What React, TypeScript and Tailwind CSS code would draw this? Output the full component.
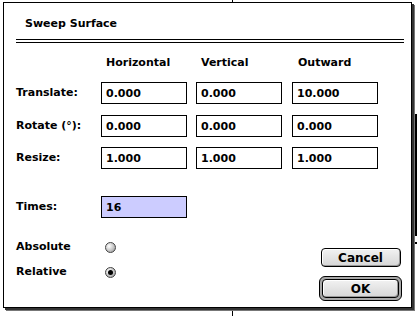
import type { ReactNode } from 'react';

function Field({ value, className = '' }: { value: string; className?: string }) {
  return (
    <div
      className={`h-[22px] w-[86px] border border-black flex items-center pl-[4px] leading-none ${className}`}
    >
      {value}
    </div>
  );
}

function Row({ label, values, className = '' }: { label: string; values: string[]; className?: string }) {
  return (
    <div className={`flex items-center ${className}`}>
      <div className="w-[85px]">{label}</div>
      <Field value={values[0]} />
      <Field value={values[1]} className="ml-[9px]" />
      <Field value={values[2]} className="ml-[10px]" />
    </div>
  );
}

function Radio({ checked }: { checked?: boolean }) {
  return (
    <div className="w-[11px] h-[11px] rounded-full border border-[#444] bg-[radial-gradient(circle_at_35%_35%,#ffffff,#c4c4c4_55%,#8a8a8a)] flex items-center justify-center">
      {checked && <div className="w-[5px] h-[5px] rounded-full bg-black" />}
    </div>
  );
}

function MacButton({ children, className = '' }: { children: ReactNode; className?: string }) {
  return (
    <div
      className={`flex items-center justify-center border border-black rounded-[4px] bg-[linear-gradient(#f2f2f2,#d6d6d6)] shadow-[inset_-1px_-1px_0_#999,inset_1px_1px_0_#fff] ${className}`}
    >
      {children}
    </div>
  );
}

export default function App() {
  return (
    <div className="relative w-[417px] h-[316px] bg-white overflow-hidden font-['DejaVu_Sans',sans-serif] font-bold text-[11px] text-black">
      {/* bits of the window behind */}
      <div className="absolute left-[232px] top-0 w-px h-[2px] bg-black" />
      <div className="absolute left-[232px] top-[310px] w-px h-[6px] bg-black" />
      <div className="absolute left-[413px] top-[114px] w-[4px] h-[122px] bg-black" />
      <div className="absolute left-[413px] top-[242px] w-[4px] h-[2px] bg-black" />

      <div className="relative ml-[3px] mt-[2px] w-[409px] h-[306px] border border-black bg-white shadow-[2px_2px_0_#333,3px_3px_0_#777]">
        <div className="pl-[21px] mt-[14px] leading-[14px]">Sweep Surface</div>
        <div className="ml-[12px] mt-[8px] w-[388px] h-[4px] border-t border-b border-black" />

        <div className="flex ml-[102px] mt-[13px] leading-[14px]">
          <div className="w-[95px]">Horizontal</div>
          <div className="w-[97px]">Vertical</div>
          <div>Outward</div>
        </div>

        <div className="pl-[12px]">
          <Row label="Translate:" values={['0.000', '0.000', '10.000']} className="mt-[12px]" />
          <Row label="Rotate (°):" values={['0.000', '0.000', '0.000']} className="mt-[11px]" />
          <Row label="Resize:" values={['1.000', '1.000', '1.000']} className="mt-[10px]" />

          <div className="flex items-center mt-[27px]">
            <div className="w-[85px]">Times:</div>
            <Field value="16" className="bg-[#ccccff]" />
          </div>

          <div className="flex">
            <div className="flex flex-col gap-[11px] mt-[22px]">
              <div className="flex items-center h-[14px]">
                <div className="w-[89px]">Absolute</div>
                <Radio />
              </div>
              <div className="flex items-center h-[14px]">
                <div className="w-[89px]">Relative</div>
                <Radio checked />
              </div>
            </div>

            <div className="ml-auto mr-[9px] flex flex-col items-center mt-[30px]">
              <MacButton className="w-[80px] h-[19px] text-[12px]">Cancel</MacButton>
              <div className="mt-[9px] p-[2px] border border-black rounded-[6px] bg-[#a8a8a8]">
                <MacButton className="w-[77px] h-[19px] text-[12px]">OK</MacButton>
              </div>
            </div>
          </div>
        </div>
      </div>
    </div>
  );
}
